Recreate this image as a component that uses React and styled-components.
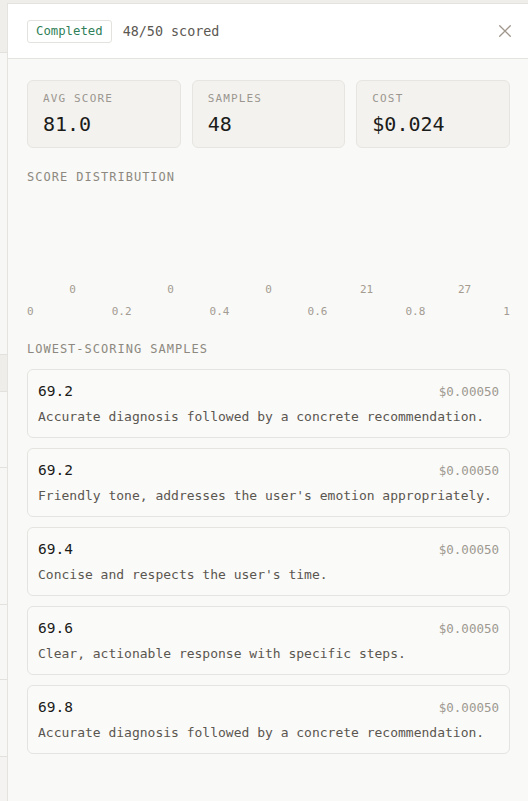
import styled, { createGlobalStyle } from "styled-components";

const GlobalStyle = createGlobalStyle`
  * { box-sizing: border-box; }
  html, body {
    margin: 0;
    padding: 0;
    background: #f4f3f1;
    font-family: "DejaVu Sans Mono", "Liberation Mono", monospace;
  }
`;

const stats = [
  { label: "Avg score", value: "81.0" },
  { label: "Samples", value: "48" },
  { label: "Cost", value: "$0.024" },
];

const bins = [0, 0, 0, 21, 27];
const ticks = ["0", "0.2", "0.4", "0.6", "0.8", "1"];

const samples = [
  { score: "69.2", cost: "$0.00050", text: "Accurate diagnosis followed by a concrete recommendation." },
  { score: "69.2", cost: "$0.00050", text: "Friendly tone, addresses the user's emotion appropriately." },
  { score: "69.4", cost: "$0.00050", text: "Concise and respects the user's time." },
  { score: "69.6", cost: "$0.00050", text: "Clear, actionable response with specific steps." },
  { score: "69.8", cost: "$0.00050", text: "Accurate diagnosis followed by a concrete recommendation." },
];

// rows of the runs table behind the drawer
const pageRows = [
  { h: 302, head: false },
  { h: 37, head: true },
  { h: 76, head: false },
  { h: 137, head: false },
  { h: 75, head: false },
  { h: 77, head: false },
];

export default function App() {
  return (
    <>
      <GlobalStyle />
      <Page>
        <PageTop />
        {pageRows.map((row, i) => (
          <PageRow key={i} $h={row.h} $head={row.head} />
        ))}
      </Page>

      <Drawer>
        <Header>
          <Badge>Completed</Badge>
          <Progress>48/50 scored</Progress>
          <CloseButton type="button" aria-label="Close">
            <svg width="12" height="12" viewBox="0 0 12 12" fill="none">
              <path d="M0.7 0.7L11.3 11.3M11.3 0.7L0.7 11.3" stroke="#a0968c" strokeWidth="1.3" strokeLinecap="round" />
            </svg>
          </CloseButton>
        </Header>

        <Body>
          <StatGrid>
            {stats.map((s) => (
              <StatCard key={s.label}>
                <StatLabel>{s.label}</StatLabel>
                <StatValue>{s.value}</StatValue>
              </StatCard>
            ))}
          </StatGrid>

          <SectionTitle>Score distribution</SectionTitle>
          <Chart>
            {bins.map((count, i) => (
              <Column key={i}>
                <Count>{count}</Count>
              </Column>
            ))}
          </Chart>
          <Axis>
            {ticks.map((t) => (
              <Tick key={t}>{t}</Tick>
            ))}
          </Axis>

          <SectionTitle $top={22}>Lowest-scoring samples</SectionTitle>
          <SampleList>
            {samples.map((s, i) => (
              <SampleCard key={i}>
                <SampleHead>
                  <Score>{s.score}</Score>
                  <Cost>{s.cost}</Cost>
                </SampleHead>
                <Reason>{s.text}</Reason>
              </SampleCard>
            ))}
          </SampleList>
        </Body>
      </Drawer>
    </>
  );
}

const Page = styled.div`
  min-height: 801px;
  display: flex;
  flex-direction: column;
`;

const PageTop = styled.div`
  height: 53px;
  background: #efeeeb;
  border-bottom: 1px solid #e2e1dd;
`;

const PageRow = styled.div`
  height: ${(p) => p.$h}px;
  background: ${(p) => (p.$head ? "#eeedea" : "#f7f7f5")};
  border-bottom: 1px solid #e2e1dd;
`;

const Drawer = styled.aside`
  position: fixed;
  top: 3px;
  left: 7px;
  right: 0;
  bottom: 0;
  display: flex;
  flex-direction: column;
  background: #f9f9f7;
  border-left: 1px solid #e4e3df;
  border-top: 1px solid #e4e3df;
  overflow: hidden;
`;

const Header = styled.header`
  height: 55px;
  flex-shrink: 0;
  display: flex;
  align-items: center;
  padding: 0 17px 0 19px;
  background: #ffffff;
  border-bottom: 1px solid #e4e3df;
`;

const Badge = styled.span`
  display: inline-flex;
  align-items: center;
  height: 23px;
  padding: 0 8px;
  border: 1px solid #e3e2de;
  border-radius: 3px;
  font-size: 12.3px;
  color: #2f7f58;
  background: #ffffff;
`;

const Progress = styled.span`
  margin-left: 11px;
  font-size: 13.4px;
  color: #5b5852;
`;

const CloseButton = styled.button`
  margin-left: auto;
  width: 12px;
  height: 12px;
  padding: 0;
  border: 0;
  background: none;
  display: flex;
  align-items: center;
  justify-content: center;
  cursor: pointer;
`;

const Body = styled.div`
  padding: 21px 18px 0 19px;
`;

const StatGrid = styled.div`
  display: grid;
  grid-template-columns: repeat(3, 1fr);
  gap: 11px;
`;

const StatCard = styled.div`
  padding: 11px 15px 11px;
  background: #f3f2ef;
  border: 1px solid #e6e5e1;
  border-radius: 6px;
`;

const StatLabel = styled.div`
  font-size: 11px;
  line-height: 14px;
  letter-spacing: 1.15px;
  text-transform: uppercase;
  color: #9b978f;
`;

const StatValue = styled.div`
  margin-top: 6px;
  font-size: 20px;
  line-height: 24px;
  font-weight: 500;
  color: #1b1b19;
`;

const SectionTitle = styled.h3`
  margin: ${(p) => p.$top ?? 21}px 0 0;
  font-size: 12px;
  line-height: 16px;
  font-weight: 400;
  letter-spacing: 1px;
  text-transform: uppercase;
  color: #8d8980;
`;

const Chart = styled.div`
  margin-top: 10px;
  height: 102px;
  display: grid;
  grid-template-columns: repeat(5, 1fr);
  column-gap: 7px;
`;

const Column = styled.div`
  display: flex;
  flex-direction: column;
  justify-content: flex-end;
  align-items: center;
`;

const Count = styled.span`
  font-size: 11px;
  line-height: 14px;
  color: #a59c91;
`;

const Axis = styled.div`
  margin-top: 8px;
  display: flex;
  justify-content: space-between;
`;

const Tick = styled.span`
  font-size: 11px;
  line-height: 14px;
  color: #a39c93;
`;

const SampleList = styled.div`
  margin-top: 12px;
  display: flex;
  flex-direction: column;
  gap: 10px;
`;

const SampleCard = styled.div`
  padding: 11px 10px 11px;
  background: #fafaf8;
  border: 1px solid #e5e4e0;
  border-radius: 6px;
`;

const SampleHead = styled.div`
  display: flex;
  justify-content: space-between;
  align-items: baseline;
`;

const Score = styled.span`
  font-size: 14.5px;
  line-height: 20px;
  font-weight: 500;
  color: #1b1b19;
`;

const Cost = styled.span`
  font-size: 12.5px;
  color: #9d9990;
`;

const Reason = styled.p`
  margin: 7px 0 0;
  font-size: 13px;
  line-height: 18px;
  color: #5a5650;
`;
